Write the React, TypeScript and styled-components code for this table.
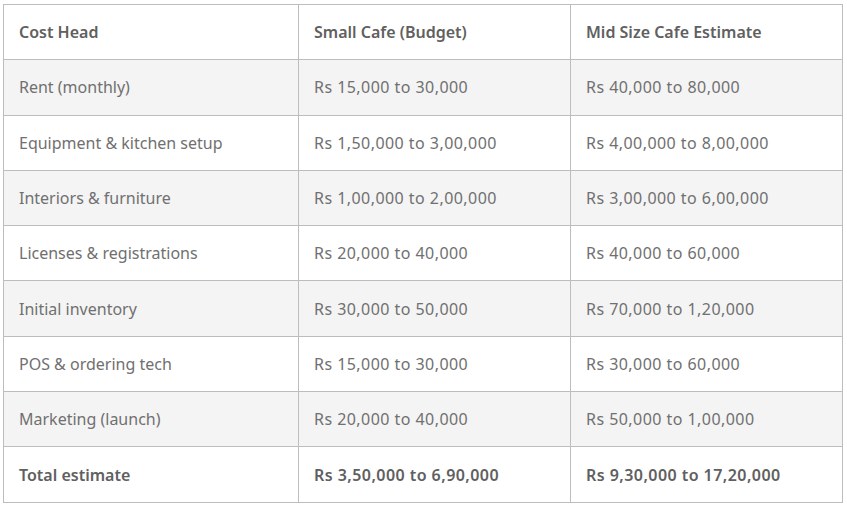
import React from "react";
import styled, { createGlobalStyle } from "styled-components";

interface Row {
  head: string;
  small: string;
  mid: string;
}

const rows: Row[] = [
  { head: "Rent (monthly)", small: "Rs 15,000 to 30,000", mid: "Rs 40,000 to 80,000" },
  { head: "Equipment & kitchen setup", small: "Rs 1,50,000 to 3,00,000", mid: "Rs 4,00,000 to 8,00,000" },
  { head: "Interiors & furniture", small: "Rs 1,00,000 to 2,00,000", mid: "Rs 3,00,000 to 6,00,000" },
  { head: "Licenses & registrations", small: "Rs 20,000 to 40,000", mid: "Rs 40,000 to 60,000" },
  { head: "Initial inventory", small: "Rs 30,000 to 50,000", mid: "Rs 70,000 to 1,20,000" },
  { head: "POS & ordering tech", small: "Rs 15,000 to 30,000", mid: "Rs 30,000 to 60,000" },
  { head: "Marketing (launch)", small: "Rs 20,000 to 40,000", mid: "Rs 50,000 to 1,00,000" },
];

const GlobalStyle = createGlobalStyle`
  body {
    margin: 0;
    background: #fff;
    font-family: "Noto Sans", "Open Sans", sans-serif;
  }
`;

function App() {
  return (
    <Wrapper>
      <GlobalStyle />
      <CostTable>
        <colgroup>
          <col style={{ width: 295 }} />
          <col style={{ width: 272 }} />
          <col style={{ width: 272 }} />
        </colgroup>
        <thead>
          <tr>
            <HeadCell>Cost Head</HeadCell>
            <HeadCell>Small Cafe (Budget)</HeadCell>
            <HeadCell>Mid Size Cafe Estimate</HeadCell>
          </tr>
        </thead>
        <tbody>
          {rows.map((r, i) => (
            <BodyRow key={r.head} $shaded={i % 2 === 0}>
              <Cell>{r.head}</Cell>
              <Cell $numeric>{r.small}</Cell>
              <Cell $numeric>{r.mid}</Cell>
            </BodyRow>
          ))}
          <BodyRow $shaded={false}>
            <Cell $bold>Total estimate</Cell>
            <Cell $bold $numeric>Rs 3,50,000 to 6,90,000</Cell>
            <Cell $bold $numeric>Rs 9,30,000 to 17,20,000</Cell>
          </BodyRow>
        </tbody>
      </CostTable>
    </Wrapper>
  );
}

export default App;

const Wrapper = styled.div`
  padding: 4px 0 0 3px;
`;

const CostTable = styled.table`
  border-collapse: collapse;
  table-layout: fixed;
  width: 840px;
  font-size: 16px;
  color: #707070;
`;

const HeadCell = styled.th`
  height: 54.3px;
  padding: 0 15px;
  text-align: left;
  font-weight: 600;
  color: #606060;
  border: 1px solid #bdbdbd;
  background: #fff;
`;

const BodyRow = styled.tr<{ $shaded: boolean }>`
  background: ${(p) => (p.$shaded ? "#f4f4f4" : "#fff")};
`;

const Cell = styled.td<{ $bold?: boolean; $numeric?: boolean }>`
  height: 54.3px;
  padding: 0 15px;
  border: 1px solid #bdbdbd;
  font-weight: ${(p) => (p.$bold ? 600 : 400)};
  color: ${(p) => (p.$bold ? "#606060" : "#707070")};
  letter-spacing: ${(p) => (p.$numeric ? "0.45px" : "0")};
  white-space: nowrap;
`;
